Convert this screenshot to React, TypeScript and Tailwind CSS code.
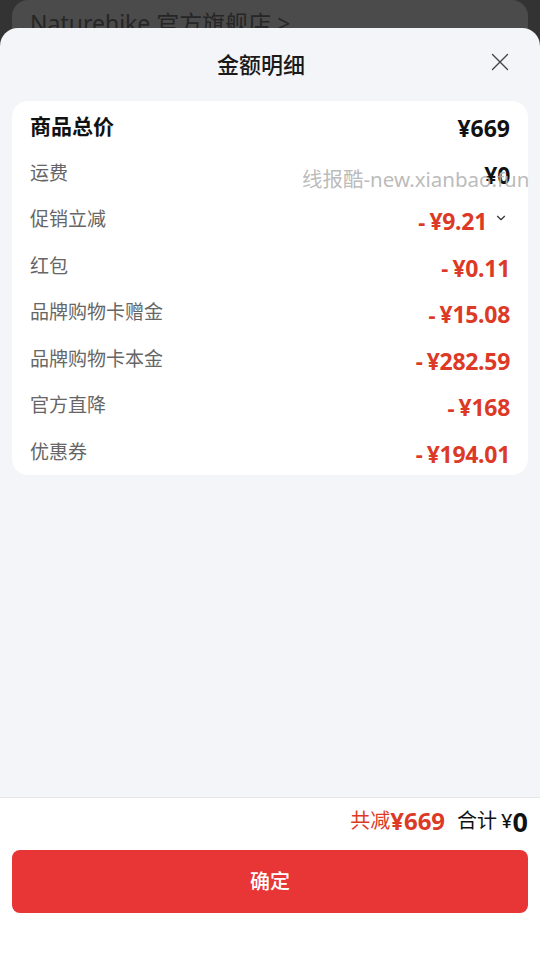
import { X, ChevronDown } from 'lucide-react'

const rows = [
    { label: '运费', value: '¥0', red: false },
    { label: '促销立减', value: '¥9.21', red: true, more: true },
    { label: '红包', value: '¥0.11', red: true },
    { label: '品牌购物卡赠金', value: '¥15.08', red: true },
    { label: '品牌购物卡本金', value: '¥282.59', red: true },
    { label: '官方直降', value: '¥168', red: true },
    { label: '优惠券', value: '¥194.01', red: true },
]

const font = { fontFamily: '"Noto Sans", "Noto Sans CJK SC", sans-serif' }

export default function App() {
    return (
        <div className="relative flex h-[967px] w-[540px] flex-col overflow-hidden bg-[#333333]" style={font}>
            {/* page behind the sheet */}
            <div className="mx-3 h-[40px] shrink-0 rounded-t-[16px] bg-[#4b4b4b] px-[18px] pt-[12px] text-[23px] leading-none text-[#262626]">
                Naturehike 官方旗舰店 &gt;
            </div>

            <div className="absolute left-0 right-0 top-[28px] bottom-0 flex flex-col rounded-t-[18px] bg-[#f4f5f8]">
                <div className="relative flex h-[73px] shrink-0 items-center justify-center pr-[18px]">
                    <span className="text-[22px] font-medium text-[#1a1a1a]">金额明细</span>
                    <X className="absolute right-[25px] top-[19px] text-[#444]" size={30} strokeWidth={1.1} />
                </div>

                <div className="mx-3 flex flex-col rounded-[16px] bg-white px-[18px] pt-[2px]">
                    <div className="flex h-[46.5px] items-center justify-between">
                        <span className="text-[21px] font-bold text-[#111]">商品总价</span>
                        <span className="pt-[3px] text-[23px] font-bold text-[#111]">¥669</span>
                    </div>
                    {rows.map((r) => (
                        <div key={r.label} className="flex h-[46.5px] items-center justify-between">
                            <span className="text-[19px] text-[#666]">{r.label}</span>
                            <span className="flex items-center pt-[4px]">
                                {r.red && (
                                    <span className="mr-[4px] text-[22px] font-bold text-[#dc3a26]">-</span>
                                )}
                                <span className={`text-[23px] font-bold tracking-[-0.3px] ${r.red ? 'text-[#dc3a26]' : 'text-[#111]'}`}>
                                    {r.value}
                                </span>
                                {r.more && (
                                    <ChevronDown className="ml-[7px] mr-[2px] mb-[6px] text-[#333]" size={14} strokeWidth={2} />
                                )}
                            </span>
                        </div>
                    ))}
                </div>

                <div className="flex-1" />

                <div className="flex h-[170px] shrink-0 flex-col border-t border-[#e6e6e6] bg-white px-3">
                    <div className="flex h-[46px] items-center justify-end">
                        <span className="text-[20px] text-[#dc3a26]">共减</span>
                        <span className="text-[24px] font-bold text-[#dc3a26]">¥669</span>
                        <span className="ml-[12px] text-[20px] text-[#111]">合计</span>
                        <span className="ml-[4px] text-[20px] font-medium text-[#111]">¥</span>
                        <span className="text-[27px] font-bold leading-none text-[#111]">0</span>
                    </div>
                    <button className="mt-[6px] flex h-[63px] items-center justify-center rounded-[8px] bg-[#e83535] text-[20px] font-medium text-white">
                        确定
                    </button>
                </div>
            </div>

            {/* watermark */}
            <div className="pointer-events-none absolute left-[302px] top-[169px] text-[20.5px] leading-none text-[#b3b3b3]/90">
                线报酷-new.xianbao.fun
            </div>
        </div>
    )
}
